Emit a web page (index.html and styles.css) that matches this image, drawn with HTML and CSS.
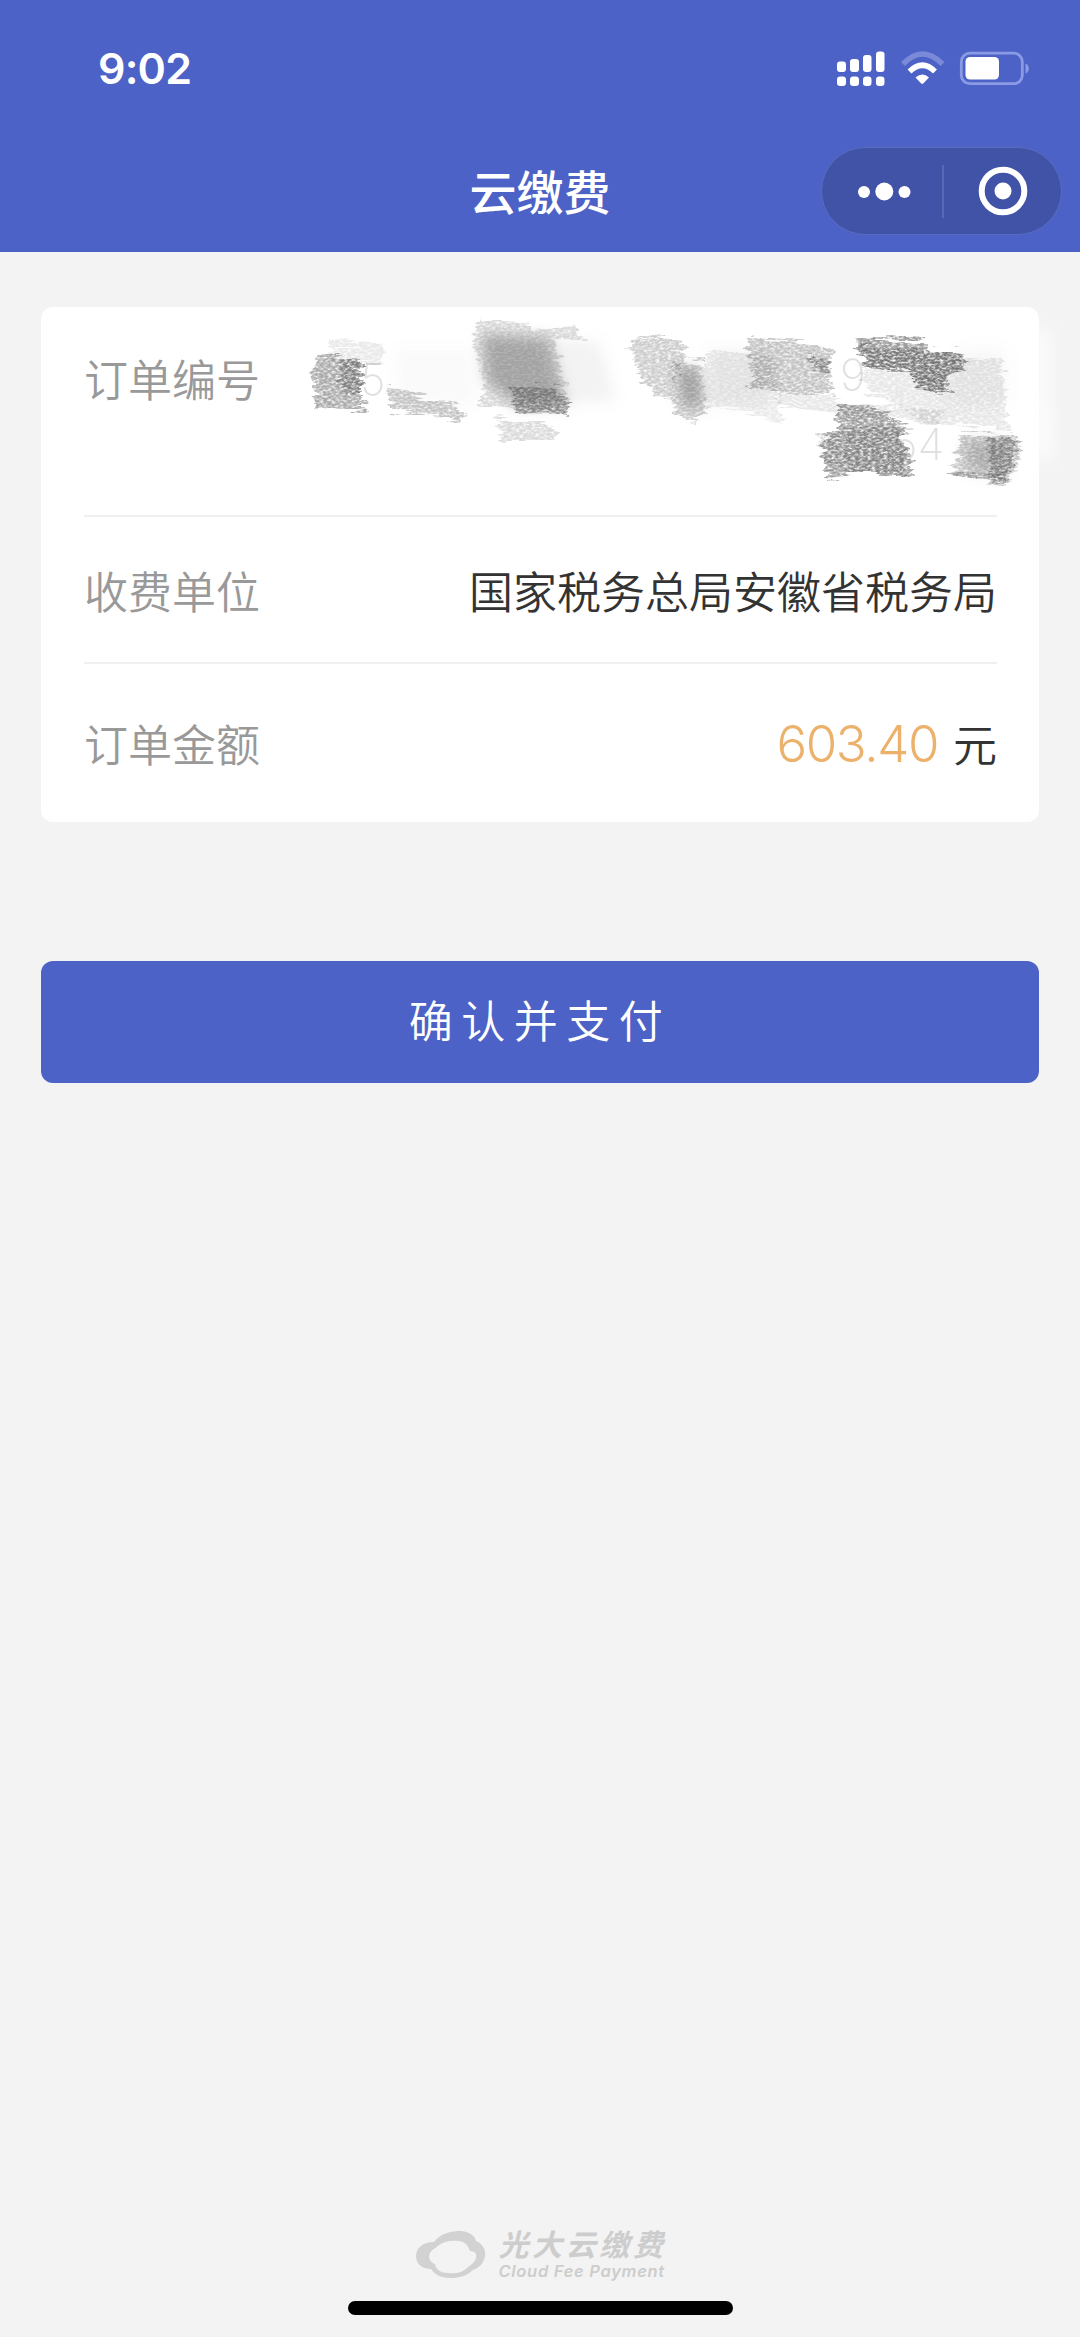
FILE: index.html
```html
<!DOCTYPE html>
<html lang="zh-CN">

<head>
    <meta charset="UTF-8">
    <meta name="viewport" content="width=device-width, initial-scale=1.0">
    <title>云缴费</title>
    <link rel="stylesheet" href="styles.css">
</head>

<body>

    <header class="header">
        <div class="status-bar">
            <span class="time">9:02</span>
            <svg class="status-icons" width="194" height="36" viewBox="836 50 194 36">
                <!-- Signal -->
                <g fill="#fff">
                    <rect x="837" y="61.5" width="9" height="10.5" rx="3" />
                    <rect x="850" y="59" width="9" height="13" rx="3" />
                    <rect x="863" y="55" width="8.500" height="17" rx="3" />
                    <rect x="876" y="51.500" width="8.500" height="20.500" rx="3" />
                    <rect x="837" y="76.500" width="9" height="9.500" rx="3.200" />
                    <rect x="850" y="76.500" width="9" height="9.500" rx="3.200" />
                    <rect x="863" y="76.500" width="8.500" height="9.500" rx="3.200" />
                    <rect x="876" y="76.500" width="8.500" height="9.500" rx="3.200" />
                </g>
                <!-- Wifi -->
                <path d="M903 64Q922.500 44 942.500 64" fill="none" stroke="#7b8ad8" stroke-width="5.500" />
                <path d="M909.500 71.500Q922.500 59 935 71.500" fill="none" stroke="#fff" stroke-width="5.500" />
                <path d="M915.500 77.500Q922.500 71.500 929 77.500L923.500 83.300Q922.300 84.500 921 83.300Z" fill="#fff" />
                <!-- Battery -->
                <rect x="961.300" y="53.200" width="61" height="30.500" rx="8.500" fill="none" stroke="#8b9ae4" stroke-width="2.800" />
                <rect x="965.500" y="57" width="33.500" height="22.500" rx="4.500" fill="#fff" />
                <path d="M1025.500 63.500C1030 65 1030 72 1025.500 73.500Z" fill="#8b9ae4" />
            </svg>
        </div>
        <div class="nav-bar">
            <h1 class="title">云缴费</h1>
            <div class="capsule">
                <svg class="capsule-btn" width="120" height="86" viewBox="0 0 120 86" fill="#fff">
                    <circle cx="42" cy="44" r="6" />
                    <circle cx="62.300" cy="43.500" r="9" />
                    <circle cx="82.500" cy="44" r="6" />
                </svg>
                <span class="capsule-line"></span>
                <svg class="capsule-btn" width="117" height="86" viewBox="0 0 117 86">
                    <circle cx="59" cy="43" r="21.300" fill="none" stroke="#fff" stroke-width="6" />
                    <circle cx="59" cy="43" r="8.500" fill="#fff" />
                </svg>
            </div>
        </div>
    </header>

    <main class="content">
        <section class="card">
            <div class="row row-order">
                <span class="label">订单编号</span>
                <!-- Order number, scribbled out -->
                <svg class="scribble" width="780" height="190" viewBox="280 305 780 190">
                    <defs>
                        <filter id="pencil" x="270" y="300" width="800" height="200" filterUnits="userSpaceOnUse">
                            <feTurbulence type="fractalNoise" baseFrequency="0.025 0.22" numOctaves="3" seed="4" result="streak" />
                            <feDisplacementMap in="SourceGraphic" in2="streak" scale="20" xChannelSelector="R" yChannelSelector="A" result="rough" />
                            <feTurbulence type="fractalNoise" baseFrequency="0.25 0.5" numOctaves="4" seed="9" />
                            <feColorMatrix values="0 0 0 0 0  0 0 0 0 0  0 0 0 0 0  2.2 0 0 0 -0.35" result="grain" />
                            <feComposite in="rough" in2="grain" operator="in" />
                            <feGaussianBlur stdDeviation="0.6" />
                        </filter>
                        <filter id="soft" x="270" y="300" width="800" height="200" filterUnits="userSpaceOnUse">
                            <feGaussianBlur stdDeviation="7" />
                        </filter>
                    </defs>
                    <path d="M1030 330H1052V405L1055 410V460H1030Z" fill="#fff" opacity="0.6" filter="url(#soft)" />
                    <g fill="#9a9a9a" filter="url(#soft)">
                        <path d="M482 334L548 338 566 404 520 408 486 382Z" opacity="0.7" />
                        <path d="M545 338L600 342 615 400 565 404Z" opacity="0.12" />
                        <path d="M395 350H475V408L400 400Z" opacity="0.05" />
                        <path d="M710 350H770V405H710Z" opacity="0.12" />
                        <path d="M960 350H1005V405H945Z" opacity="0.08" />
                        <path d="M678 368H698L702 408 682 406Z" opacity="0.7" />
                        <path d="M965 440L1008 442 1004 474 968 470Z" opacity="0.45" />
                    </g>
                    <g class="digits">
                        <text x="360" y="395">5</text>
                        <text x="840" y="391">9</text>
                        <text x="892" y="460">54</text>
                    </g>
                    <g fill="#555" filter="url(#pencil)">
                        <path d="M329 341L384 343 386 364 332 360Z" opacity="0.13" />
                        <path d="M316 356L362 360 362 399 369 413 313 407 318 396 309 382Z" opacity="0.5" />
                        <path d="M342 358L361 361 362 394 340 392Z" opacity="0.45" />
                        <path d="M390 385L430 401 462 406 464 419 437 417 392 409Z" opacity="0.35" />
                        <path d="M478 320L530 324 535 330 575 327 584 342 552 336 567 392 568 414 515 412 477 407 485 386 474 344Z" opacity="0.22" />
                        <path d="M513 389L550 386 567 400 568 415 515 414Z" opacity="0.55" />
                        <path d="M495 418L548 423 556 435 557 441H503Z" opacity="0.22" />
                        <path d="M632 337L685 341 684 362 677 373 672 401 645 386 633 361Z" opacity="0.3" />
                        <path d="M675 362L701 363 706 410 695 421 673 414Z" opacity="0.3" />
                        <path d="M703 352L773 354 784 421 704 405Z" opacity="0.12" />
                        <path d="M745 338L802 341 832 348 828 370 834 398 808 395 750 389 752 362Z" opacity="0.36" />
                        <path d="M811 354L832 356 829 371 810 365Z" opacity="0.5" />
                        <path d="M777 393L890 406 944 411 938 426 778 406Z" opacity="0.14" />
                        <path d="M854 338L928 341 930 350 963 353 964 368 948 376 950 390 916 388 912 370 865 368Z" opacity="0.58" />
                        <path d="M858 345L964 354 962 368 946 373 947 389 915 386 911 368 866 367Z" opacity="0.45" />
                        <path d="M862 370L1001 357 1009 429 925 423 870 392Z" opacity="0.14" />
                        <path d="M836 404L890 410 888 422 907 428 904 443 911 463 910 474 850 474 827 481 823 462 822 436 838 430Z" opacity="0.55" />
                        <path d="M842 425L898 427 904 450 903 472 848 474Z" opacity="0.35" />
                        <path d="M818 432L840 436 842 468 823 467Z" opacity="0.24" />
                        <path d="M961 432L1015 436 1020 460 1012 474 1008 486 968 480 950 473 956 460Z" opacity="0.32" />
                        <path d="M987 436L1014 440 1014 462 1006 480 990 479Z" opacity="0.5" />
                        <path d="M949 471L1003 473 1010 483 970 481Z" opacity="0.4" />
                    </g>
                </svg>
            </div>
            <div class="row">
                <span class="label">收费单位</span>
                <span class="value">国家税务总局安徽省税务局</span>
            </div>
            <div class="row">
                <span class="label">订单金额</span>
                <span class="value"><span class="amount">603.40</span>元</span>
            </div>
        </section>

        <button type="button" class="btn">确认并支付</button>
    </main>

    <footer class="footer">
        <div class="brand">
            <svg class="brand-logo" width="70" height="48" viewBox="0 0 70 48">
                <path fill="#d2d2d2" fill-rule="evenodd" d="M18 11C25 2 35 0 45 0C54 1 59 5 60 10C67 13 70 19 69 25C68 32 63 37 57 39C51 45 43 47 34 47C25 47 18 43 15 38C6 38 0 33 0 25C0 17 7 11 18 11ZM23 14C28 10 36 9 43 10C50 11 52 15 54 20C59 20 61 23 60 27C59 31 55 34 51 37C46 42 38 43 32 42C25 42 20 39 19 33C14 31 12 27 14 22C16 18 19 18 23 14Z" />
            </svg>
            <div class="brand-text">
                <span class="brand-cn">光大云缴费</span>
                <span class="brand-en">Cloud Fee Payment</span>
            </div>
        </div>
        <div class="home-indicator"></div>
    </footer>

</body>

</html>
```

FILE: styles.css
```css
* {
    margin: 0;
    padding: 0;
    box-sizing: border-box;
}

body {
    font-family: "Noto Sans CJK SC", sans-serif;
    background: #f3f3f3;
    width: 1080px;
    height: 2337px;
    display: flex;
    flex-direction: column;
    overflow: hidden;
}

/* Header */
.header {
    height: 252px;
    background: #4c62c6;
    color: #fff;
}

.status-bar {
    height: 136px;
    padding: 0 50px 0 98px;
    display: flex;
    justify-content: space-between;
    align-items: center;
}

.time {
    font-family: Inter, sans-serif;
    font-size: 43px;
    font-weight: 600;
    line-height: 52px;
    letter-spacing: -0.8px;
}

.nav-bar {
    height: 110px;
    padding: 0 18px 0 18px;
    display: grid;
    grid-template-columns: 1fr auto 1fr;
    align-items: center;
}

.title {
    grid-column: 2;
    font-size: 47px;
    font-weight: 500;
    line-height: 60px;
    padding-bottom: 3px;
}

.capsule {
    justify-self: end;
    width: 241px;
    height: 88px;
    display: flex;
    align-items: center;
    background: #4153a7;
    border: 1px solid #5a6cc0;
    border-radius: 44px;
}

.capsule-btn {
    display: block;
}

.capsule-line {
    width: 2px;
    height: 53px;
    background: #5768b6;
}

/* Order card */
.content {
    flex: 1;
    padding: 55px 41px 0;
}

.card {
    background: #fff;
    border-radius: 12px;
    padding: 0 42px 0 43px;
    height: 515px;
}

.row {
    position: relative;
    height: 147px;
    display: flex;
    justify-content: space-between;
    align-items: center;
    border-bottom: 2px solid #f0f0f0;
    font-size: 44px;
    font-weight: 350;
    line-height: 60px;
}

.row-order {
    height: 210px;
    align-items: flex-start;
    padding-top: 41px;
}

.row:last-child {
    height: 158px;
    border-bottom: none;
}

.label {
    color: #999;
}

.value {
    color: #333;
}

.amount {
    font-family: Inter, sans-serif;
    font-size: 51px;
    font-weight: 300;
    color: #ecb16b;
    letter-spacing: -1.4px;
    margin-right: 15px;
}

.scribble {
    position: absolute;
    left: 196px;
    top: -2px;
}

.digits {
    font-family: Inter, sans-serif;
    font-size: 44px;
    font-weight: 200;
    fill: #e0e0e0;
}

.btn {
    display: block;
    width: 100%;
    height: 122px;
    margin-top: 139px;
    padding-bottom: 6px;
    background: #4c62c6;
    color: #fff;
    border: none;
    border-radius: 12px;
    font-family: inherit;
    font-size: 44px;
    font-weight: 350;
    letter-spacing: 8.5px;
}

/* Footer */
.footer {
    height: 110px;
    display: flex;
    flex-direction: column;
    align-items: center;
}

.brand {
    display: flex;
    gap: 13px;
    height: 74px;
    padding: 4px 0 0 2px;
}

.brand-text {
    display: flex;
    flex-direction: column;
    color: #cdcdcd;
    font-style: italic;
}

.brand-cn {
    font-size: 30px;
    font-weight: 700;
    line-height: 24px;
    letter-spacing: 3.6px;
}

.brand-en {
    font-family: Inter, sans-serif;
    font-size: 16.5px;
    font-weight: 600;
    line-height: 20px;
    letter-spacing: 0.7px;
    padding-top: 6px;
}

.home-indicator {
    width: 385px;
    height: 14px;
    background: #000;
    border-radius: 7px;
}
```
